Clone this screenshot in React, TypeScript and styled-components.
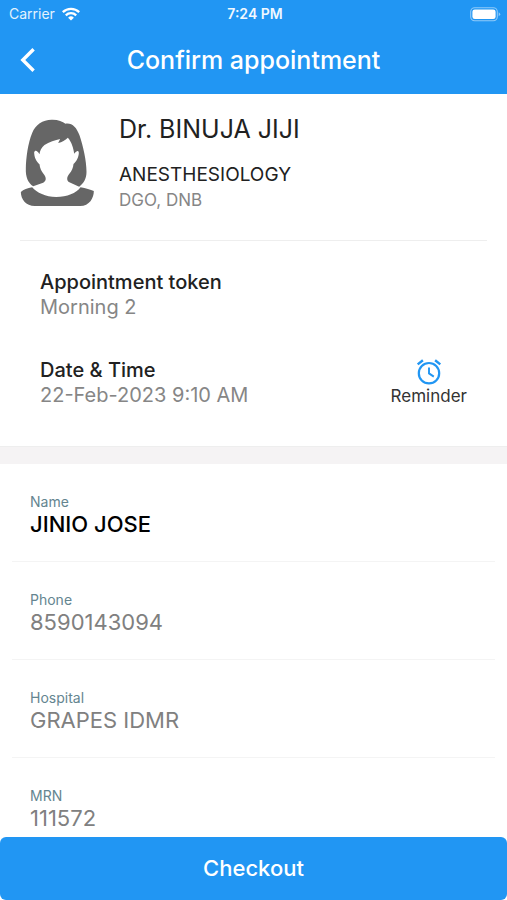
import React from "react";
import styled, { createGlobalStyle } from "styled-components";

const GlobalStyle = createGlobalStyle`
  *, *::before, *::after { box-sizing: border-box; }
  body { margin: 0; background: #fff; }
  h1, h2, p, dl, dt, dd { margin: 0; font-weight: 400; }
  button { font: inherit; border: 0; padding: 0; background: none; cursor: pointer; }
  svg { display: block; }
`;

const blue = "#2196f3";

const Screen = styled.div`
  display: flex;
  flex-direction: column;
  height: 100vh;
  font-family: Inter, "Liberation Sans", sans-serif;
  color: #212121;
  background: #fff;
`;

const Header = styled.header`
  flex: none;
  background: ${blue};
  color: #fff;
`;

const StatusBar = styled.div`
  display: grid;
  grid-template-columns: 1fr auto 1fr;
  align-items: center;
  height: 28px;
  padding: 0 6px 0 9px;
  font-size: 14px;
  line-height: 20px;
`;

const Carrier = styled.span`
  display: flex;
  align-items: center;
  gap: 7px;
  color: #e3f2fd;
`;

const Clock = styled.span`
  font-weight: 600;
  color: #f0f8ff;
`;

const BatterySlot = styled.span`
  justify-self: end;
`;

const NavBar = styled.div`
  display: grid;
  grid-template-columns: 56px 1fr 56px;
  align-items: center;
  height: 66px;
  padding-bottom: 2px;
`;

const BackButton = styled.button`
  display: flex;
  align-items: center;
  height: 48px;
  padding-left: 20px;
  color: #fff;
`;

const Title = styled.h1`
  font-size: 25px;
  line-height: 32px;
  font-weight: 500;
  text-align: center;
`;

const Content = styled.main`
  flex: 1;
  min-height: 0;
  overflow-y: auto;
  scrollbar-width: none;
`;

const Doctor = styled.section`
  display: flex;
  align-items: center;
  gap: 24px;
  margin: 0 20px;
  padding: 19px 0 28px;
  border-bottom: 1px solid #eeeeee;
`;

const DoctorName = styled.h2`
  font-size: 25px;
  line-height: 32px;
  margin-bottom: 17px;
`;

const Speciality = styled.p`
  font-size: 19px;
  line-height: 26px;
`;

const Degrees = styled.p`
  font-size: 17px;
  line-height: 24px;
  color: #868686;
`;

const Details = styled.section`
  display: flex;
  align-items: flex-end;
  justify-content: space-between;
  padding: 28px 40px 39px;
`;

const DetailList = styled.dl`
  display: grid;
  gap: 38px;
`;

const DetailLabel = styled.dt`
  font-size: 20px;
  line-height: 26px;
  font-weight: 500;
`;

const DetailValue = styled.dd`
  font-size: 20px;
  line-height: 24px;
  color: #868686;
`;

const ReminderButton = styled.button`
  display: flex;
  flex-direction: column;
  align-items: center;
  font-size: 17px;
  line-height: 22px;
  color: #333;
`;

const Band = styled.div`
  height: 18px;
  background: #f5f3f4;
  border-top: 1px solid #eeeeee;
`;

const Fields = styled.dl`
  padding: 0 12px;
`;

const Field = styled.div`
  padding: 29px 18px 24px;
  border-bottom: 1px solid #f4f4f4;
`;

const FieldLabel = styled.dt`
  font-size: 14px;
  line-height: 18px;
  color: #648590;
`;

const FieldValue = styled.dd<{ $strong?: boolean }>`
  font-size: 22px;
  line-height: 26px;
  font-weight: ${(p) => (p.$strong ? 500 : 400)};
  color: ${(p) => (p.$strong ? "#000" : "#808080")};
`;

const CheckoutButton = styled.button`
  flex: none;
  height: 63px;
  padding-bottom: 2px;
  border-radius: 6px;
  background: ${blue};
  color: #fff;
  font-size: 22px;
  line-height: 30px;
  font-weight: 500;
`;

const WifiIcon = () => (
  <svg width="18" height="14" viewBox="0 0 18 14" fill="none" stroke="#fff" strokeWidth="2.3" aria-hidden="true">
    <path d="M.8 5.1a11.8 11.8 0 0 1 16.4 0" />
    <path d="M3.8 8.3a7.5 7.5 0 0 1 10.4 0" />
    <path d="M9 13.6 6.1 10.7a4.1 4.1 0 0 1 5.8 0Z" fill="#fff" stroke="none" />
  </svg>
);

const BatteryIcon = () => (
  <svg width="31" height="15" viewBox="0 0 31 15" aria-hidden="true">
    <rect x=".7" y=".7" width="26.6" height="13.1" rx="4" fill="none" stroke="#90caf9" strokeWidth="1.1" />
    <rect x="2.4" y="2.4" width="23.2" height="9.7" rx="2.4" fill="#fff" />
    <path d="M28.7 5.2q3 2 0 4.1Z" fill="#90caf9" />
  </svg>
);

const BackIcon = () => (
  <svg width="16" height="26" viewBox="0 0 16 26" fill="none" stroke="#fff" strokeWidth="3.4" aria-hidden="true">
    <path d="M13.6 2.2 2.8 13l10.8 10.8" />
  </svg>
);

const Avatar = () => (
  <svg width="75" height="88" viewBox="60 54 224 264" fill="#666" role="img" aria-label="Doctor">
    <path
      fillRule="evenodd"
      d="M99 256C84 246 76 229 77 202C78 170 83 127 96 96C106 70 129 55 157 56C175 56 187 61 196 68C216 65 229 79 238 103C249 135 259 181 259 212C259 232 251 246 237 257L206 243C198 237 201 226 207 219C215 210 219 200 220 189C229 181 236 167 236 155C235 148 230 148 222 158C220 141 214 122 203 110C195 118 186 123 174 126L180 114C166 118 146 123 133 132C124 139 119 149 118 160C112 148 104 146 102 154C102 169 109 183 118 190C119 202 124 211 131 220C139 231 139 240 129 245Z"
    />
    <path d="M96 259C110 275 136 288 168 288C201 288 228 277 241 259C257 262 271 266 281 270C281 291 268 315 240 315H104C77 315 62 294 62 273C70 266 82 262 96 259Z" />
  </svg>
);

const AlarmIcon = () => (
  <svg width="26" height="26" viewBox="0 0 26 26" fill="none" stroke={blue} strokeWidth="2.2" aria-hidden="true">
    <circle cx="13" cy="14.2" r="10.2" />
    <path d="M1.7 5.4 6.9 1.2M24.3 5.4 19.1 1.2" strokeWidth="2.4" />
    <path d="M13 8.4v6l4.8 3.2" strokeWidth="1.9" />
  </svg>
);

const details = [
  { label: "Appointment token", value: "Morning 2" },
  { label: "Date & Time", value: "22-Feb-2023 9:10 AM" },
];

const fields = [
  { label: "Name", value: "JINIO JOSE", strong: true },
  { label: "Phone", value: "8590143094" },
  { label: "Hospital", value: "GRAPES IDMR" },
  { label: "MRN", value: "111572" },
];

export default function App() {
  return (
    <Screen>
      <GlobalStyle />
      <Header>
        <StatusBar>
          <Carrier>
            Carrier
            <WifiIcon />
          </Carrier>
          <Clock>7:24 PM</Clock>
          <BatterySlot>
            <BatteryIcon />
          </BatterySlot>
        </StatusBar>
        <NavBar>
          <BackButton type="button" aria-label="Back">
            <BackIcon />
          </BackButton>
          <Title>Confirm appointment</Title>
        </NavBar>
      </Header>
      <Content>
        <Doctor>
          <Avatar />
          <div>
            <DoctorName>Dr. BINUJA JIJI</DoctorName>
            <Speciality>ANESTHESIOLOGY</Speciality>
            <Degrees>DGO, DNB</Degrees>
          </div>
        </Doctor>
        <Details>
          <DetailList>
            {details.map((d) => (
              <div key={d.label}>
                <DetailLabel>{d.label}</DetailLabel>
                <DetailValue>{d.value}</DetailValue>
              </div>
            ))}
          </DetailList>
          <ReminderButton type="button">
            <AlarmIcon />
            Reminder
          </ReminderButton>
        </Details>
        <Band />
        <Fields>
          {fields.map((f) => (
            <Field key={f.label}>
              <FieldLabel>{f.label}</FieldLabel>
              <FieldValue $strong={f.strong}>{f.value}</FieldValue>
            </Field>
          ))}
        </Fields>
      </Content>
      <CheckoutButton type="button">Checkout</CheckoutButton>
    </Screen>
  );
}
